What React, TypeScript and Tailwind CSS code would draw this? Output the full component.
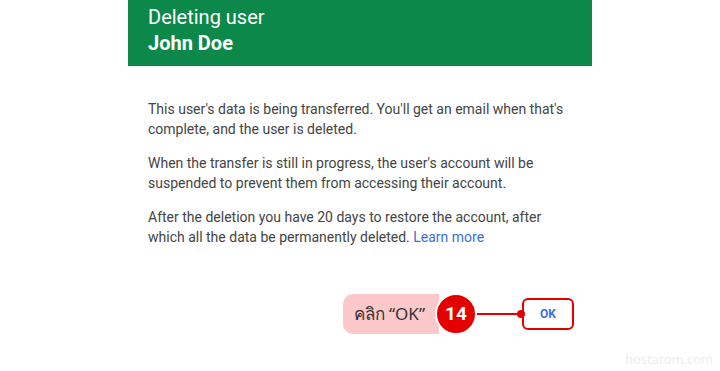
import React from 'react';

const paragraphs = [
  "This user's data is being transferred. You'll get an email when that's complete, and the user is deleted.",
  "When the transfer is still in progress, the user's account will be suspended to prevent them from accessing their account.",
];

export default function App() {
  return (
    <div className="relative w-[720px] h-[371px] bg-white overflow-hidden font-['Roboto',sans-serif]">
      <div className="ml-[128px] w-[464px] flex flex-col">
        {/* Header */}
        <div className="bg-[#0d884b] h-[66px] pl-5 pt-[4px] text-white text-[20px] leading-[26px]">
          <div>Deleting user</div>
          <div className="font-bold">John Doe</div>
        </div>

        {/* Body */}
        <div className="px-5 pt-[33px] text-[14px] leading-[20px] text-[#444] flex flex-col gap-[14px]">
          {paragraphs.map((p, i) => (
            <p key={i}>{p}</p>
          ))}
          <p>
            After the deletion you have 20 days to restore the account, after which all the data be permanently
            deleted. <span className="text-[#3b6fd8]">Learn more</span>
          </p>
        </div>

        {/* Footer */}
        <div className="mt-[46px] flex items-center justify-end pr-[18px]">
          <div className="h-[40px] pl-[11px] pr-[14px] flex items-center rounded-l-[10px] bg-[#fcc8ca] text-[17px] text-[#333] font-['Noto_Sans','DejaVu_Sans',sans-serif]">
            คลิก “OK”
          </div>
          <div className="-ml-[4px] w-[42px] h-[42px] rounded-full bg-[#e50000] border-2 border-white flex items-center justify-center text-white font-bold text-[19px] font-['Roboto',sans-serif]">
            14
          </div>
          <div className="relative w-[45px] h-[2px] bg-[#e50000]">
            <span className="absolute -right-[3px] -top-[3px] w-[8px] h-[8px] rounded-full bg-[#e50000]" />
          </div>
          <button className="w-[52px] h-[32px] rounded-[6px] border-2 border-[#e50000] bg-white text-[#3b6fd8] font-bold text-[12px]">
            OK
          </button>
        </div>
      </div>

      <div className="absolute right-[7px] bottom-[2px] text-[13px] text-[#ececec] font-['Open_Sans',sans-serif]">
        hostatom.com
      </div>
    </div>
  );
}
